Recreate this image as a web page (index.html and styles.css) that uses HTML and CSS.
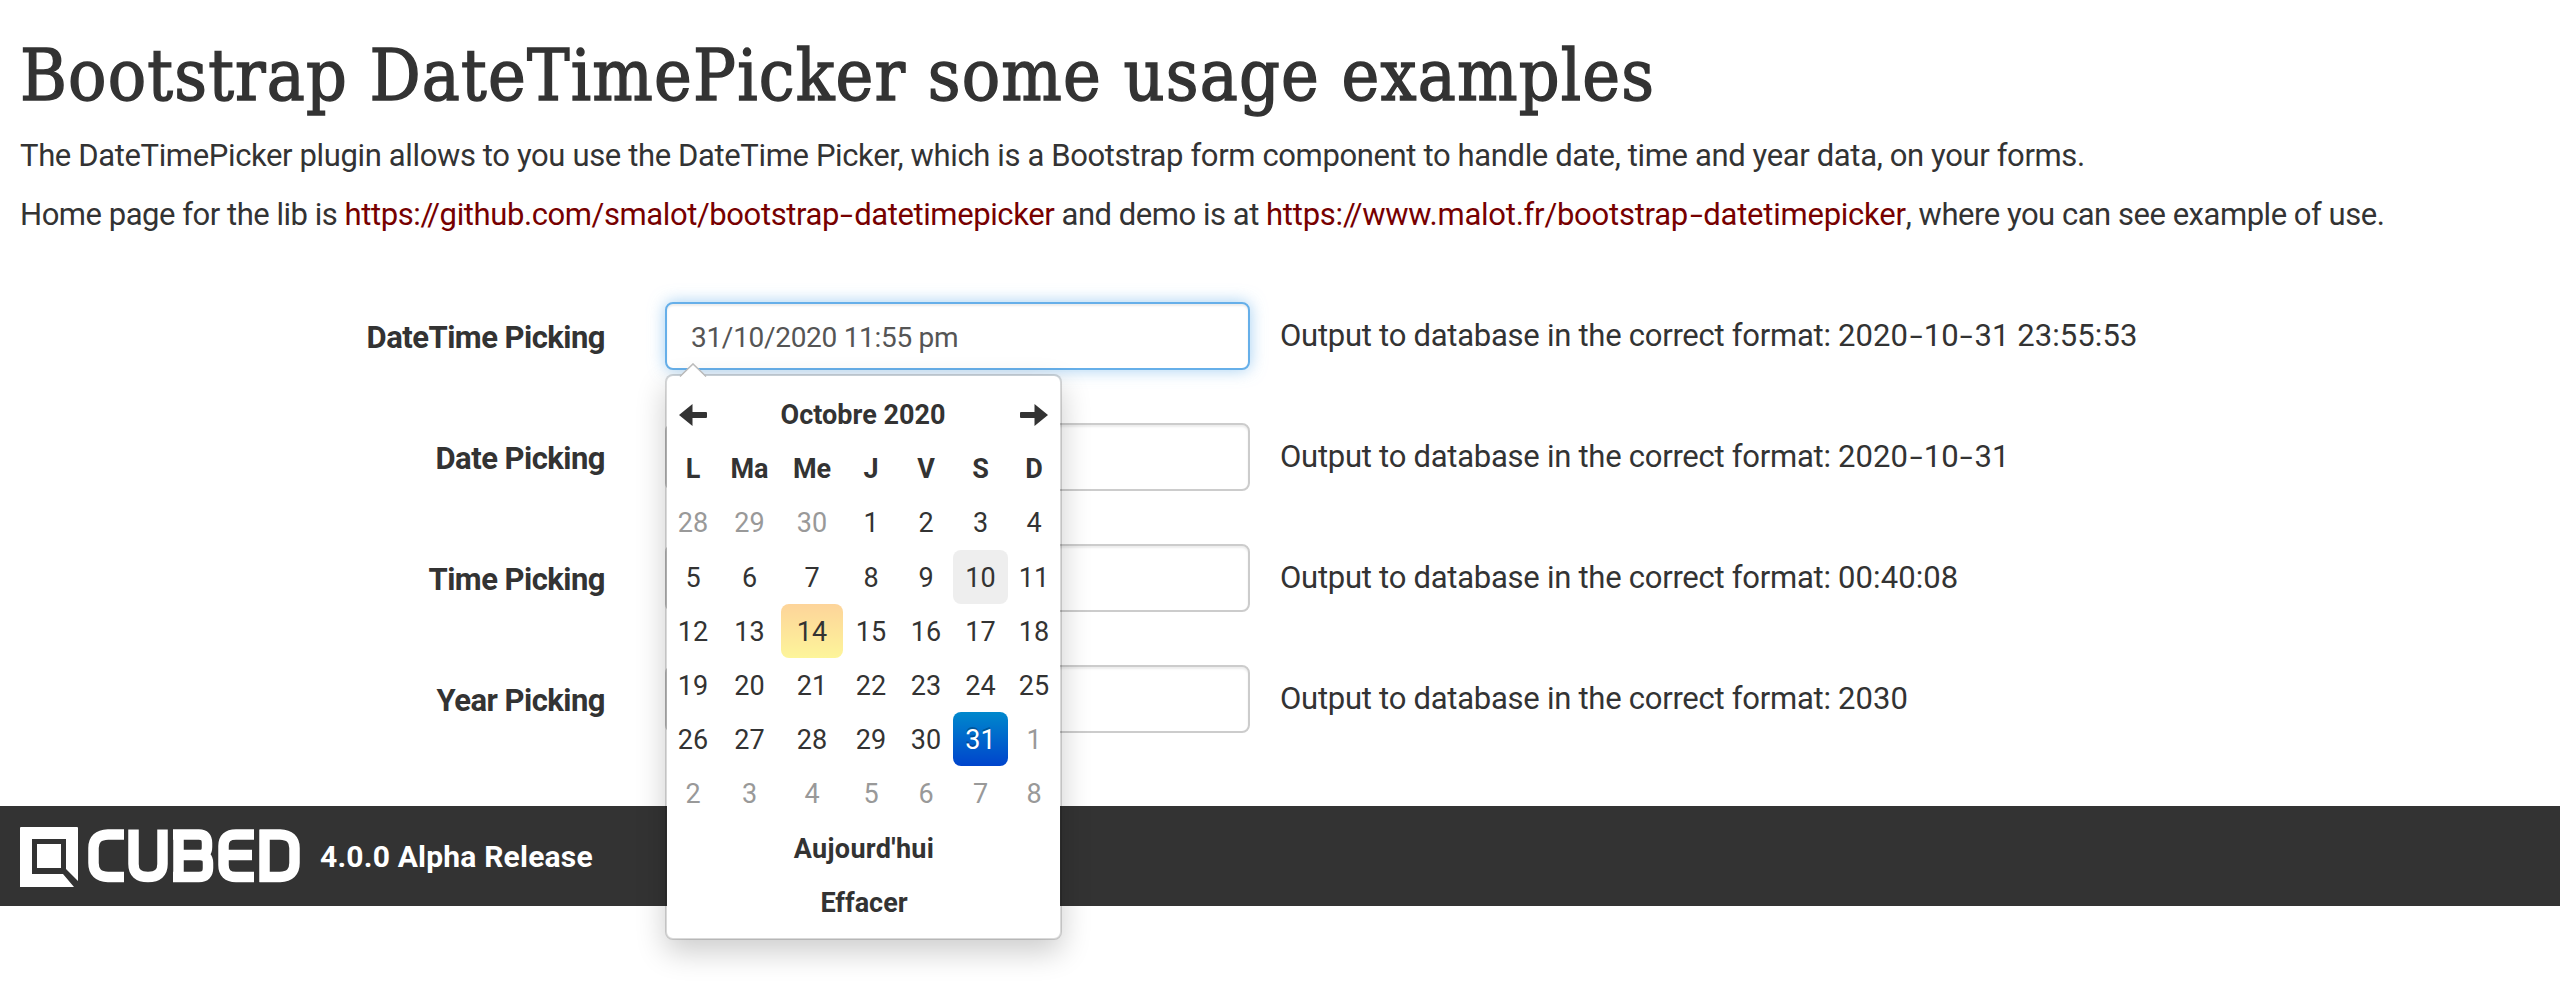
FILE: index.html
```html
<!DOCTYPE html>
<html lang="en">
<head>
<meta charset="utf-8">
<title>Bootstrap DateTimePicker</title>
<link rel="stylesheet" href="styles.css">
</head>
<body>
<main>
  <h1>Bootstrap DateTimePicker some usage examples</h1>
  <p class="intro">The DateTimePicker plugin allows to you use the DateTime Picker, which is a Bootstrap form component to handle date, time and year data, on your forms.</p>
  <p class="intro tight">Home page for the lib is <a class="link1">https:<span class="slash">/</span>/github.com/smalot/bootstrap<i>-</i>datetimepicker</a> and demo is at <a class="link2">https:<span class="slash">/</span>/www.malot.fr/bootstrap<i>-</i>datetimepicker</a>, where you can see example of use.</p>
  <form class="form">
    <div class="row">
      <label>DateTime Picking</label>
      <div class="field focus">31/10/2020 11:55 pm
        <div class="picker">
          <svg class="caret" width="28" height="14" viewBox="0 0 28 14"><path d="M1 13.500 14 1 27 13.500" fill="#fff" stroke="#bbb" stroke-width="1.600"/><path d="M2 14 14 2.400 26 14z" fill="#fff"/></svg>
          <table>
            <colgroup><col class="c50"><col class="c63"><col class="c62"><col class="c56"><col class="c54"><col class="c55"><col class="c52"></colgroup>
            <tr><th><svg width="28" height="22" viewBox="0 0 28 22"><path d="M0 11 13.500 0V8H27Q28 8 28 9V13Q28 14 27 14H13.500V22Z"/></svg></th><th colspan="5">Octobre 2020</th><th><svg width="28" height="22" viewBox="0 0 28 22"><path d="M28 11 14.500 0V8H1Q0 8 0 9V13Q0 14 1 14H14.500V22Z"/></svg></th></tr>
            <tr><th>L</th><th>Ma</th><th>Me</th><th>J</th><th>V</th><th>S</th><th>D</th></tr>
            <tr><td class="old">28</td><td class="old">29</td><td class="old">30</td><td>1</td><td>2</td><td>3</td><td>4</td></tr>
            <tr><td>5</td><td>6</td><td>7</td><td>8</td><td>9</td><td class="hover">10</td><td>11</td></tr>
            <tr><td>12</td><td>13</td><td class="today">14</td><td>15</td><td>16</td><td>17</td><td>18</td></tr>
            <tr><td>19</td><td>20</td><td>21</td><td>22</td><td>23</td><td>24</td><td>25</td></tr>
            <tr><td>26</td><td>27</td><td>28</td><td>29</td><td>30</td><td class="active">31</td><td class="old">1</td></tr>
            <tr><td class="old">2</td><td class="old">3</td><td class="old">4</td><td class="old">5</td><td class="old">6</td><td class="old">7</td><td class="old">8</td></tr>
            <tr><th colspan="7" class="wide">Aujourd'hui</th></tr>
            <tr><th colspan="7">Effacer</th></tr>
          </table>
        </div>
      </div>
      <div class="out">Output to database in the correct format: <span>2020<i>-</i>10<i>-</i>31 23:55:53</span></div>
    </div>
    <div class="row"><label>Date Picking</label><div class="field"></div><div class="out">Output to database in the correct format: <span>2020<i>-</i>10<i>-</i>31</span></div></div>
    <div class="row"><label>Time Picking</label><div class="field"></div><div class="out">Output to database in the correct format: <span>00:40:08</span></div></div>
    <div class="row"><label>Year Picking</label><div class="field"></div><div class="out">Output to database in the correct format: <span>2030</span></div></div>
  </form>
</main>
<footer>
  <svg class="logo" width="280" height="60" viewBox="0 0 280 60">
    <path fill="#fff" fill-rule="evenodd" d="M1 0H57Q58 0 58 1V54L46 42V12H12V47H43L54 60H0V1Q0 0 1 0Z"/>
    <path fill="#fff" d="M17 17H41V41H17z"/>
    <g fill="none" stroke="#fff" stroke-width="10.500">
      <path d="M104 7.500H88Q73.500 8 73.500 21V36Q73.500 49.500 88 50H104"/>
      <path d="M113.500 2.500V37Q113.500 50 128 50Q142.500 50 142.500 37V2.500"/>
      <path d="M158.500 3V55M153 7.500H179Q187 7.500 187 16V20Q187 28 180 28H158M180 28Q188 28 188 36V41Q188 50 179 50H153"/>
      <path d="M234 7.500H216Q203.500 7.500 203.500 19V38Q203.500 50 216 50H234M203 28H232"/>
      <path d="M244.500 3V55M239.500 7.500H260Q274.500 8 274.500 21V36Q274.500 49.500 260 50H239.500"/>
    </g>
  </svg>
  <strong>4.0.0 Alpha Release</strong>
</footer>
</body>
</html>
```
FILE: styles.css
```css
* { box-sizing: border-box; }
body { margin: 0; height: 981px; overflow: hidden; background: #fff; color: #333; font-family: Roboto, "Open Sans", sans-serif; font-size: 31px; }
main { height: 806px; padding: 36px 20px 0; }
h1 { margin: 0; height: 90px; line-height: 80px; font-family: "DejaVu Serif Condensed", "DejaVu Serif", serif; font-stretch: condensed; font-size: 71px; font-weight: 400; letter-spacing: 1.180px; -webkit-text-stroke: 1.400px #333; white-space: nowrap; }
.intro { margin: 0; height: 59px; line-height: 60px; white-space: nowrap; letter-spacing: -.365px; }
.tight { letter-spacing: -.470px; }
a { color: #700; }
.link1 { letter-spacing: -.400px; }
.link2 { letter-spacing: -.240px; }
.slash { letter-spacing: -6px; }
i { display: inline-block; margin: 0 3.500px; font-style: normal; transform: scaleX(1.500); }
.form { padding-top: 58px; }
.row { display: grid; grid-template-columns: 585px 585px 1fr; height: 121px; white-space: nowrap; }
label { text-align: right; font-weight: 700; line-height: 71px; letter-spacing: -.530px; }
.field { position: relative; margin-left: 60px; width: 585px; height: 68px; padding-left: 24px; border: 2px solid #ccc; border-radius: 8px; line-height: 67px; font-size: 28px; letter-spacing: -.300px; color: #555; box-shadow: inset 0 2px 2px rgba(0,0,0,.075); background: #fff; }
.focus { border-color: #66afe9; box-shadow: inset 0 2px 2px rgba(0,0,0,.075), 0 0 16px rgba(102,175,233,.6); }
.out { padding-left: 90px; line-height: 68px; letter-spacing: -.260px; }
.out span { letter-spacing: .080px; }
.picker { position: absolute; z-index: 2; left: -2px; top: 70px; width: 397px; height: 566px; padding: 11px 0 0 1px; border: 2px solid rgba(0,0,0,.15); border-radius: 8px; background: #fff; background-clip: padding-box; color: #333; letter-spacing: 0; box-shadow: 0 12px 30px rgba(0,0,0,.2); }
.caret { position: absolute; left: 12px; top: -13px; }
table { border-collapse: collapse; table-layout: fixed; width: 392px; line-height: 52px; font-size: 27px; }
tr { height: 54.200px; }
td, th { padding: 2px 0 0; text-align: center; border-radius: 8px; }
th { font-weight: 700; }
th svg { display: block; margin: 0 auto; fill: #333; }
.wide { letter-spacing: .300px; }
.c50 { width: 50px; } .c63 { width: 63px; } .c62 { width: 62px; } .c56 { width: 56px; } .c54 { width: 54px; } .c55 { width: 55px; } .c52 { width: 52px; }
.old { color: #999; }
.hover { background: #eee; }
.today { background: linear-gradient(#fdd49a, #fdf59a); }
.active { color: #fff; background: linear-gradient(#08c, #04c); text-shadow: 0 -2px 0 rgba(0,0,0,.25); }
footer { display: flex; align-items: center; gap: 20px; height: 100px; padding-left: 20px; background: #333; color: #fff; font-size: 30px; letter-spacing: .200px; }
.logo { position: relative; top: 1px; }
```
